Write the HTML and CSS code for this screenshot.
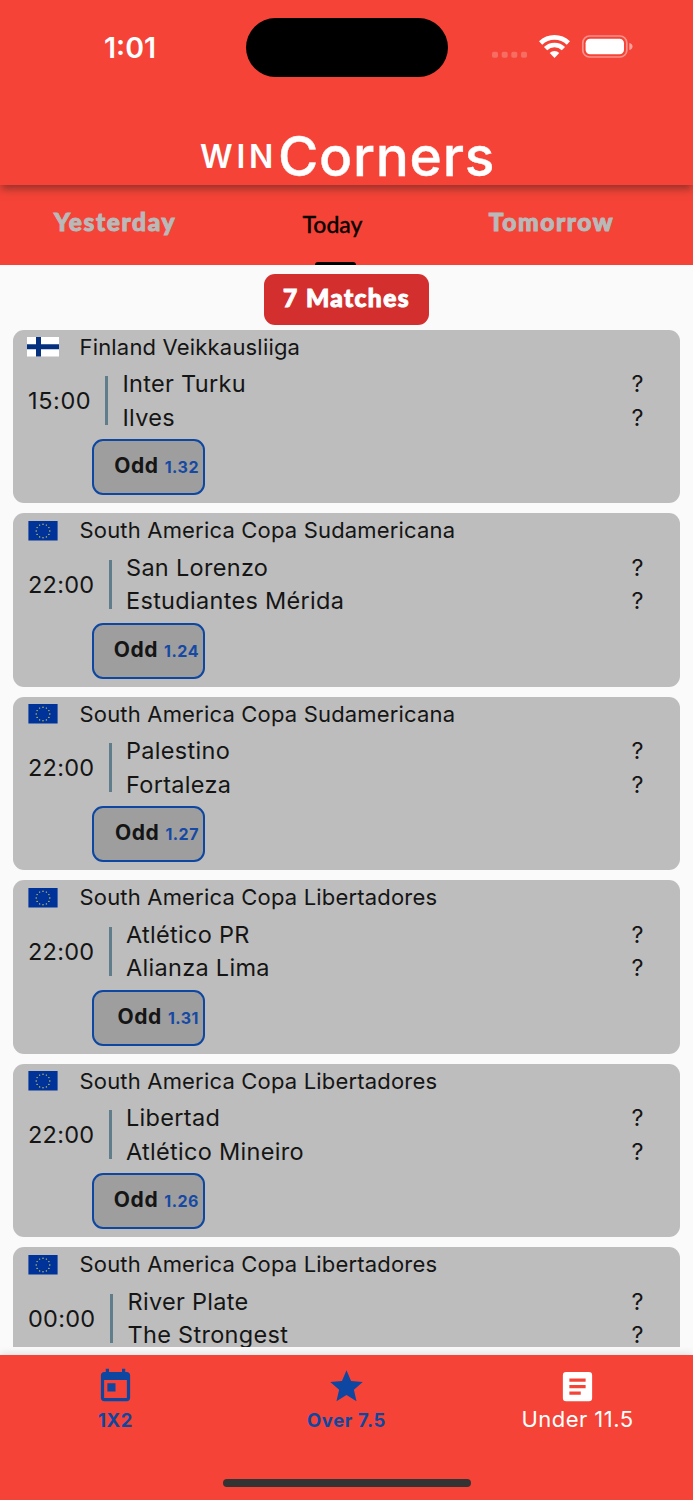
FILE: index.html
```
<!DOCTYPE html>
<html lang="en">
<head>
<meta charset="utf-8">
<title>WIN Corners</title>
<link rel="stylesheet" href="styles.css">
</head>
<body>
<svg class="defs" width="0" height="0" aria-hidden="true">
  <symbol id="flag-fi" viewBox="0 0 32 20"><path fill="#fff" d="M0 0h32v19.500H0z"/><path fill="#04307f" d="M9 0h5v19.500H9zM0 7.200h32v5H0z"/></symbol>
  <symbol id="flag-eu" viewBox="0 0 30 20"><path fill="#039" d="M.4 0h29.200v19.500H.4z"/><g fill="#d9cf4a"><circle cx="15" cy="3.2" r=".7"/><circle cx="18.4" cy="4.1" r=".7"/><circle cx="20.9" cy="6.6" r=".7"/><circle cx="21.8" cy="10" r=".7"/><circle cx="20.9" cy="13.4" r=".7"/><circle cx="18.4" cy="15.9" r=".7"/><circle cx="15" cy="16.8" r=".7"/><circle cx="11.6" cy="15.9" r=".7"/><circle cx="9.1" cy="13.4" r=".7"/><circle cx="8.2" cy="10" r=".7"/><circle cx="9.1" cy="6.6" r=".7"/><circle cx="11.6" cy="4.1" r=".7"/></g></symbol>
</svg>
<div class="phone">
  <header class="header">
    <div class="status">
      <div class="clock"><span>1:01</span></div>
      <div class="island"></div>
      <svg class="signals" width="142" height="24" viewBox="0 0 142 24">
        <g fill="#fff" fill-opacity=".22"><rect x="0" y="16.700" width="6" height="6" rx="1.800"/><rect x="9.7" y="16.700" width="6" height="6" rx="1.800"/><rect x="19.3" y="16.700" width="6" height="6" rx="1.800"/><rect x="29" y="16.700" width="6" height="6" rx="1.800"/></g>
        <g fill="none" stroke="#fff" stroke-width="4.6"><path d="M48.6 8a20 20 0 0 1 27.8 0"/><path d="M53.600 13.700a12.500 12.500 0 0 1 17.800 0"/></g>
        <path fill="#fff" d="M57.7 18a7 7 0 0 1 9.6 0L62.5 22.900z"/>
        <rect x="90.800" y="1" width="44" height="21" rx="6.8" fill="none" stroke="#fff" stroke-opacity=".42" stroke-width="1.7"/>
        <rect x="93.600" y="3.700" width="38.400" height="15.600" rx="4.500" fill="#fff"/>
        <path fill="#fff" fill-opacity=".5" d="M137.3 8c2.200.6 3.200 1.800 3.200 3.500s-1 3-3.200 3.500z"/>
      </svg>
    </div>
    <h1 class="brand"><span class="brand-win">WIN</span><span class="brand-name">Corners</span></h1>
  </header>
  <nav class="tabs">
    <a class="tab"><span class="fancy yesterday">Yesterday</span></a>
    <a class="tab active"><span class="today">Today</span></a>
    <a class="tab"><span class="fancy tomorrow">Tomorrow</span></a>
  </nav>
  <main class="list">
    <div class="count"><span>7 Matches</span></div>
    <article class="card">
      <div class="league"><svg class="flag"><use href="#flag-fi"/></svg><span>Finland Veikkausliiga</span></div>
      <div class="match"><time class="t-a">15:00</time><i class="bar"></i><div class="teams"><span>Inter Turku</span><span>Ilves</span></div><div class="score"><span>?</span><span>?</span></div></div>
      <div class="odd"><b>Odd</b><em>1.32</em></div>
    </article>
    <article class="card">
      <div class="league"><svg class="flag"><use href="#flag-eu"/></svg><span>South America Copa Sudamericana</span></div>
      <div class="match"><time class="t-b">22:00</time><i class="bar"></i><div class="teams"><span>San Lorenzo</span><span>Estudiantes Mérida</span></div><div class="score"><span>?</span><span>?</span></div></div>
      <div class="odd"><b>Odd</b><em>1.24</em></div>
    </article>
    <article class="card">
      <div class="league"><svg class="flag"><use href="#flag-eu"/></svg><span>South America Copa Sudamericana</span></div>
      <div class="match"><time class="t-b">22:00</time><i class="bar"></i><div class="teams"><span>Palestino</span><span>Fortaleza</span></div><div class="score"><span>?</span><span>?</span></div></div>
      <div class="odd"><b>Odd</b><em>1.27</em></div>
    </article>
    <article class="card">
      <div class="league"><svg class="flag"><use href="#flag-eu"/></svg><span>South America Copa Libertadores</span></div>
      <div class="match"><time class="t-b">22:00</time><i class="bar"></i><div class="teams"><span>Atlético PR</span><span>Alianza Lima</span></div><div class="score"><span>?</span><span>?</span></div></div>
      <div class="odd"><b>Odd</b><em>1.31</em></div>
    </article>
    <article class="card">
      <div class="league"><svg class="flag"><use href="#flag-eu"/></svg><span>South America Copa Libertadores</span></div>
      <div class="match"><time class="t-b">22:00</time><i class="bar"></i><div class="teams"><span>Libertad</span><span>Atlético Mineiro</span></div><div class="score"><span>?</span><span>?</span></div></div>
      <div class="odd"><b>Odd</b><em>1.26</em></div>
    </article>
    <article class="card">
      <div class="league"><svg class="flag"><use href="#flag-eu"/></svg><span>South America Copa Libertadores</span></div>
      <div class="match"><time class="t-c">00:00</time><i class="bar"></i><div class="teams"><span>River Plate</span><span>The Strongest</span></div><div class="score"><span>?</span><span>?</span></div></div>
    </article>
  </main>
  <footer class="bottom">
    <div class="items">
      <a class="item"><svg width="39" height="39" viewBox="0 0 24 24"><path fill="currentColor" d="M19 3h-1V1h-2v2H8V1H6v2H5c-1.110 0-1.990.9-1.990 2L3 19c0 1.100.89 2 2 2h14c1.100 0 2-.9 2-2V5c0-1.100-.9-2-2-2zm0 16H5V8h14v11zM7 10h5v5H7z"/></svg><span>1X2</span></a>
      <a class="item"><svg width="39" height="39" viewBox="0 0 24 24"><path fill="currentColor" d="M12 17.270 18.180 21l-1.640-7.030L22 9.240l-7.190-.61L12 2 9.190 8.630 2 9.240l5.460 4.730L5.820 21z"/></svg><span>Over 7.5</span></a>
      <a class="item selected"><svg width="39" height="39" viewBox="0 0 24 24"><path fill="currentColor" fill-rule="evenodd" d="M5 3h14a2 2 0 0 1 2 2v14a2 2 0 0 1-2 2H5a2 2 0 0 1-2-2V5a2 2 0 0 1 2-2zm2 4v2h10V7zm0 4v2h10v-2zm0 4v2h7v-2z"/></svg><span>Under 11.5</span></a>
    </div>
    <div class="home"></div>
  </footer>
</div>
</body>
</html>
```
FILE: styles.css
```
* { box-sizing: border-box; }
body { margin: 0; background: #fafafa; font-family: Inter, "Liberation Sans", sans-serif; color: #151515; }
.defs { position: absolute; }
.phone { width: 693px; height: 1500px; display: flex; flex-direction: column; overflow: hidden; }
span, time, b, em { white-space: nowrap; }

.header { height: 185px; flex: none; background: #f54437; color: #fff; position: relative; z-index: 1; box-shadow: 0 5px 8px -1px rgba(60, 30, 30, .5); }
.status { height: 96px; display: grid; grid-template-columns: 245.500px 202px 245.500px; }
.clock { padding: 30px 0 0 104px; font-size: 28.500px; line-height: 35px; font-weight: 600; }
.island { height: 59px; margin-top: 18.300px; border-radius: 30px; background: #000; }
.signals { margin: 35px 0 0 44.500px; }
.brand { margin: 0; padding-left: 200px; height: 89px; display: flex; align-items: baseline; font-weight: 500; line-height: 120px; }
.brand-win { font-size: 32px; font-weight: 600; letter-spacing: 3.800px; width: 78px; position: relative; top: -8px; }
.brand-name { font-size: 55px; letter-spacing: .75px; -webkit-text-stroke: .4px #fff; }

.tabs { height: 80.300px; flex: none; background: #f54437; display: grid; grid-template-columns: repeat(3, 231px); }
.tab { display: flex; justify-content: center; color: #b9b9b9; position: relative; }
.fancy { font: 900 24.500px/30px Lato, sans-serif; padding-top: 22px; letter-spacing: 1.600px; -webkit-text-stroke: 1px currentColor; }
.yesterday { margin-right: 1px; }
.tomorrow { margin-right: 52px; letter-spacing: 1.600px; }
.today { font: 500 23px/30px Lato, sans-serif; padding-top: 24px; margin-right: 28px; color: #0a0000; -webkit-text-stroke: .3px #0a0000; }
.active::after { content: ""; position: absolute; left: 84px; bottom: 0; width: 41px; height: 3.500px; border-radius: 3px 3px 0 0; background: #000; }

.list { height: 1081.700px; flex: none; overflow: hidden; padding: 8.700px 13px 0; display: flex; flex-direction: column; gap: 10px; }
.count { align-self: center; width: 165px; height: 51px; flex: none; margin-bottom: -5px; border-radius: 11px; background: #d32f2f; color: #fff; text-align: center; font: 900 24.500px/47px Lato, sans-serif; letter-spacing: 1.400px; -webkit-text-stroke: 1px #fff; }
.card { width: 667px; height: 173.450px; flex: none; background: #bdbdbd; border-radius: 11px; }
.league { height: 34px; display: grid; grid-template-columns: 66.500px 1fr; align-items: center; font-size: 22px; letter-spacing: .18px; }
.flag { width: 32px; height: 20px; margin: 1px 0 0 14px; }
.match { height: 67px; margin-top: 3.500px; display: flex; align-items: center; padding: 0 36.500px 0 15px; font-size: 23.500px; }
.match time { letter-spacing: .6px; }
.match .t-b, .match .t-c { letter-spacing: .25px; }
.bar { width: 3px; height: 49px; background: #607d8b; }
.teams, .score { display: flex; flex-direction: column; line-height: 33.500px; }
.teams { padding-left: 14.500px; flex: 1; letter-spacing: .3px; }
.t-a { width: 77px; }
.t-b { width: 80.500px; }
.t-c { width: 82px; }
.odd { width: 113px; height: 56px; margin: 4.800px 0 0 79px; border: 2.500px solid #0d47a1; border-radius: 11px; background: #9e9e9e; display: flex; align-items: baseline; justify-content: flex-end; gap: 6px; padding-right: 4px; line-height: 50px; }
.odd b { font-size: 21px; letter-spacing: .6px; }
.odd em { font-size: 16px; font-style: normal; font-weight: 700; letter-spacing: .5px; color: #1549a3; }

.bottom { height: 145px; margin-top: auto; flex: none; background: #f54437; box-shadow: 0 -2px 7px rgba(0, 0, 0, .1); }
.items { height: 127.500px; display: grid; grid-template-columns: repeat(3, 231px); }
.item { display: flex; flex-direction: column; align-items: center; color: #0d47a1; font-size: 18.500px; font-weight: 700; letter-spacing: .6px; padding-top: 12px; line-height: 28px; }
.item.selected { color: #fff; font-size: 22px; font-weight: 400; letter-spacing: .45px; line-height: 26px; }
.home { width: 248px; height: 8px; margin: -4px auto 0; border-radius: 4px; background: #333; }
```
